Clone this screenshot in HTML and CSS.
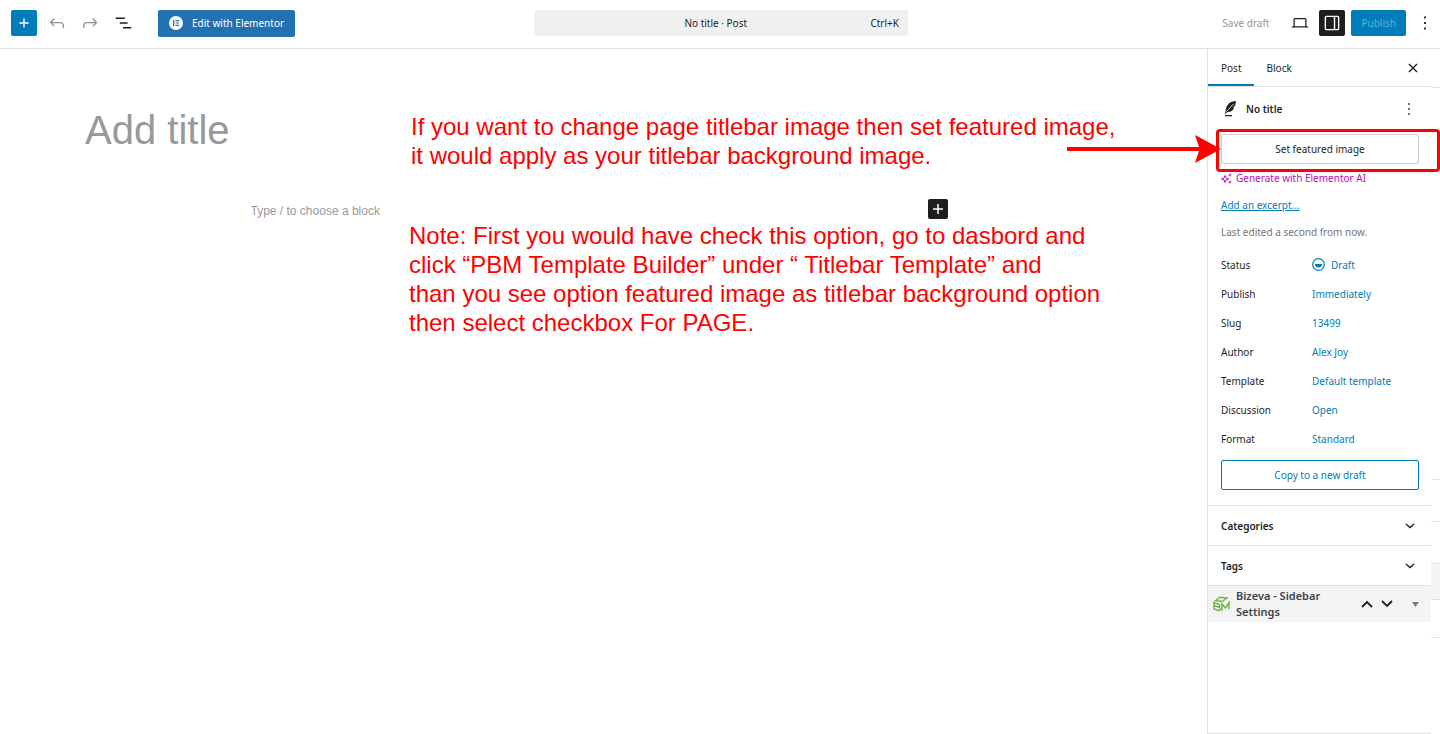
FILE: index.html
```html
<!DOCTYPE html>
<html lang="en">
<head>
    <meta charset="utf-8">
    <title>Add Post</title>
    <meta name="viewport" content="width=device-width, initial-scale=1">
    <link rel="stylesheet" href="styles.css">
</head>
<body>

    <header class="header">
        <div class="tools">
            <button class="iconBtn primary" aria-label="Block inserter">
                <svg width="22" height="22" viewBox="0 0 24 24"><path d="M12 7v10M7 12h10" stroke="currentColor" stroke-width="1.500"/></svg>
            </button>
            <button class="iconBtn muted" aria-label="Undo">
                <svg width="22" height="22" viewBox="0 0 24 24"><path fill="currentColor" d="M18.3 11.7c-.6-.6-1.4-.9-2.3-.9H6.7l2.9-3.3-1.1-1-4.5 5L8.500 16l1-1-2.700-2.700H16c.5 0 .9.2 1.300.5 1 1 1 3.400 1 4.500v.3h1.500v-.2c0-1.500 0-4.300-1.500-5.700z"/></svg>
            </button>
            <button class="iconBtn muted" aria-label="Redo">
                <svg width="22" height="22" viewBox="0 0 24 24"><path fill="currentColor" d="M15.600 6.500l-1.100 1 2.900 3.300H8c-.9 0-1.700.3-2.300.9-1.400 1.500-1.400 4.200-1.400 5.600v.2h1.500v-.3c0-1.100 0-3.500 1-4.500.3-.3.7-.5 1.300-.5h9.200L14.500 15l1.100 1.100 4.500-4.600-4.500-5z"/></svg>
            </button>
            <button class="iconBtn" aria-label="Document overview">
                <svg width="22" height="22" viewBox="0 0 24 24"><path fill="currentColor" d="M4 6h10v1.600H4V6zm4.500 5.200h8.500v1.600H8.500v-1.600zM12 16.400h9V18h-9v-1.600z"/></svg>
            </button>
            <button class="elementorBtn">
                <svg width="14" height="14" viewBox="0 0 14 14"><circle cx="7" cy="7" r="7" fill="#fff"/><path fill="#2271b1" d="M4 4h1.300v6H4zM6.500 4H10v1.200H6.500zM6.500 6.400H10v1.200H6.500zM6.500 8.800H10V10H6.500z"/></svg>
                Edit with Elementor
            </button>
        </div>
        <button class="command">
            <span class="commandTitle">No title · Post</span>
            <span>Ctrl+K</span>
        </button>
        <div class="settings">
            <button class="saveDraft" disabled>Save draft</button>
            <button class="iconBtn" aria-label="View">
                <svg width="20" height="20" viewBox="0 0 24 24"><path fill="currentColor" d="M20.500 16h-.7V8c0-1.100-.9-2-2-2H6.200c-1.100 0-2 .9-2 2v8h-.7c-.8 0-1.500.7-1.500 1.500h20c0-.8-.7-1.500-1.500-1.500zM5.700 8c0-.3.200-.5.5-.5h11.600c.3 0 .5.2.5.5v8H5.700V8z"/></svg>
            </button>
            <button class="iconBtn dark" aria-label="Settings">
                <svg width="22" height="22" viewBox="0 0 24 24"><path fill="currentColor" fill-rule="evenodd" d="M18 4H6c-1.100 0-2 .9-2 2v12c0 1.100.9 2 2 2h12c1.100 0 2-.9 2-2V6c0-1.100-.9-2-2-2zm-4 14.500H6c-.3 0-.5-.2-.5-.5V6c0-.3.2-.5.5-.5h8v13zm4.500-.5c0 .3-.2.500-.5.500h-2.500v-13H18c.3 0 .5.2.5.5v12z"/></svg>
            </button>
            <button class="publishBtn">Publish</button>
            <button class="iconBtn" aria-label="Options">
                <svg width="22" height="22" viewBox="0 0 24 24"><path fill="currentColor" d="M11 5h2v2h-2zM11 11h2v2h-2zM11 17h2v2h-2z"/></svg>
            </button>
        </div>
    </header>

    <div class="workspace">
        <main class="editor">
            <input class="titleInput" type="text" placeholder="Add title" aria-label="Add title">
            <div class="block">
                <input class="blockInput" type="text" placeholder="Type / to choose a block" aria-label="Empty block">
                <button class="addBlock" aria-label="Add block">
                    <svg width="20" height="20" viewBox="0 0 20 20"><path d="M10 5v10M5 10h10" stroke="#fff" stroke-width="1.500"/></svg>
                </button>
            </div>
            <p class="note noteTop">
                If you want to change page titlebar image then set featured image,<br>
                it would apply as your titlebar background image.
            </p>
            <p class="note noteBottom">
                Note: First you would have check this option, go to dasbord and<br>
                click “PBM Template Builder” under “ Titlebar Template” and<br>
                than you see option featured image as titlebar background option<br>
                then select checkbox For PAGE.
            </p>
        </main>

        <aside class="sidebar">
            <div class="tabs">
                <button class="tab active">Post</button>
                <button class="tab">Block</button>
                <button class="smallBtn close" aria-label="Close settings">
                    <svg width="10" height="10" viewBox="0 0 10 10"><path d="M1 1l8 8M9 1l-8 8" stroke="currentColor" stroke-width="1.400"/></svg>
                </button>
            </div>

            <section class="summary">
                <div class="cardHead">
                    <svg width="20" height="20" viewBox="0 0 20 20"><path fill="#1e1e1e" d="M15 2C9 2 5 6 4.500 12.500L4 14.500h1.200l.8-1.500c4 .3 6.300-1.700 7.200-4.600l-1.700.2 2.200-1.400C15 5.300 14.400 3.500 15 2zM4 16h7v1.200H4z"/><path d="M5.500 12.500L12.500 5" stroke="#fff" stroke-width=".8"/></svg>
                    <h2 class="cardTitle">No title</h2>
                    <button class="smallBtn" aria-label="Actions">
                        <svg width="20" height="20" viewBox="0 0 24 24"><path fill="currentColor" d="M11 5h2v2h-2zM11 11h2v2h-2zM11 17h2v2h-2z"/></svg>
                    </button>
                </div>
                <div class="featured">
                    <button class="wideBtn">Set featured image</button>
                    <svg class="arrow" width="154" height="30" viewBox="0 0 154 30"><path fill="#f00" d="M0 13h132L128 1l26 14-26 14 4-12H0z"/></svg>
                    <div class="frame"></div>
                </div>
                <button class="aiLink">
                    <svg width="11" height="11" viewBox="0 0 11 11"><path d="M4 2.500L5 5l2.500 1L5 7 4 9.500 3 7 .5 6 3 5z" fill="none" stroke="currentColor"/><path fill="currentColor" d="M9 0l.6 1.400L11 2l-1.400.6L9 4l-.6-1.400L7 2l1.400-.6zM9 7l.6 1.400L11 9l-1.400.6L9 11l-.6-1.400L7 9l1.400-.6z"/></svg>
                    Generate with Elementor AI
                </button>
                <a class="excerpt" href="#">Add an excerpt...</a>
                <p class="edited">Last edited a second from now.</p>

                <div class="row">
                    <span>Status</span>
                    <button class="value">
                        <svg width="13" height="13" viewBox="0 0 13 13"><circle cx="6.500" cy="6.500" r="5.800" fill="none" stroke="currentColor" stroke-width="1.200"/><path fill="currentColor" d="M3 6h7a3.500 3.500 0 0 1-7 0z"/></svg>
                        Draft
                    </button>
                </div>
                <div class="row"><span>Publish</span><button class="value">Immediately</button></div>
                <div class="row"><span>Slug</span><button class="value">13499</button></div>
                <div class="row"><span>Author</span><button class="value">Alex Joy</button></div>
                <div class="row"><span>Template</span><button class="value">Default template</button></div>
                <div class="row"><span>Discussion</span><button class="value">Open</button></div>
                <div class="row"><span>Format</span><button class="value">Standard</button></div>

                <button class="wideBtn copyBtn">Copy to a new draft</button>
            </section>

            <button class="panel">
                Categories
                <svg width="10" height="6" viewBox="0 0 10 6"><path d="M1 1l4 3.500L9 1" fill="none" stroke="currentColor" stroke-width="1.400"/></svg>
            </button>
            <button class="panel">
                Tags
                <svg width="10" height="6" viewBox="0 0 10 6"><path d="M1 1l4 3.500L9 1" fill="none" stroke="currentColor" stroke-width="1.400"/></svg>
            </button>

            <div class="metabox">
                <svg width="17" height="16" viewBox="0 0 17 16" fill="none" stroke="#6cb33f" stroke-width="1.400"><path d="M2.500 4.500L7 1.200l7 .8-5 3.500zM1 6.500V13l5 1.700c2-.7 1.500-3-.5-3.700 2-.5 1.500-2.500-.5-3.200zM1 9.500l4.500 1.500M9 15V8l3.500 4L16 6.500V13"/></svg>
                <h2 class="metaTitle">Bizeva - Sidebar Settings</h2>
                <button class="smallBtn" aria-label="Move up">
                    <svg width="12" height="8" viewBox="0 0 12 8"><path d="M1 7l5-5 5 5" fill="none" stroke="currentColor" stroke-width="1.800"/></svg>
                </button>
                <button class="smallBtn" aria-label="Move down">
                    <svg width="12" height="8" viewBox="0 0 12 8"><path d="M1 1l5 5 5-5" fill="none" stroke="currentColor" stroke-width="1.800"/></svg>
                </button>
                <button class="smallBtn toggle" aria-label="Toggle panel">
                    <svg width="7" height="5" viewBox="0 0 7 5"><path fill="#787c82" d="M0 0h7L3.500 5z"/></svg>
                </button>
            </div>
        </aside>

        <!-- edge of the column behind the sidebar -->
        <div class="edge">
            <div class="edgeTabs"></div>
            <div class="edgeSummary"></div>
            <div class="edgePanel"></div>
            <div class="edgePanel"></div>
            <div class="edgeMeta"></div>
            <div class="edgeLast"></div>
        </div>
    </div>

</body>
</html>
```

FILE: styles.css
```css
* {
    box-sizing: border-box;
}

body {
    min-height: 100vh;
    margin: 0;
    display: flex;
    flex-direction: column;
    background: #fff;
    color: #1e1e1e;
    font-family: "Noto Sans", sans-serif;
    font-size: 10px;
    line-height: 16px;
}

button {
    display: flex;
    align-items: center;
    margin: 0;
    padding: 0;
    border: 0;
    background: none;
    color: inherit;
    font: inherit;
    white-space: nowrap;
    cursor: pointer;
}

h2,
p {
    margin: 0;
}

svg {
    flex: none;
}

/* header */

.header {
    display: grid;
    grid-template-columns: 1fr 374px 1fr;
    align-items: center;
    height: 49px;
    padding: 0 0 2px 2px;
    border-bottom: 1px solid #e0e0e0;
}

.tools,
.settings {
    display: flex;
    align-items: center;
    gap: 7px;
}

.tools {
    padding-left: 9px;
}

.settings {
    justify-content: flex-end;
    gap: 6px;
    padding-right: 2px;
}

.iconBtn {
    justify-content: center;
    width: 26px;
    height: 26px;
    border-radius: 2px;
}

.primary {
    background: #007cba;
    color: #fff;
}

.muted {
    color: #949494;
}

.dark {
    background: #1e1e1e;
    color: #fff;
}

.elementorBtn {
    gap: 9px;
    height: 27px;
    margin-left: 15px;
    padding: 0 11px;
    border-radius: 2px;
    background: #2271b1;
    color: #fff;
}

.command {
    height: 26px;
    padding: 0 9px 0 27px;
    border-radius: 4px;
    background: #f0f0f0;
}

.commandTitle {
    flex: 1;
}

.saveDraft {
    margin-right: 12px;
    color: #949494;
}

.publishBtn {
    height: 26px;
    padding: 0 10px;
    border-radius: 2px;
    background: #007cba;
    color: #66b0d6;
}

/* editor */

.workspace {
    flex: 1;
    display: flex;
}

.editor {
    position: relative;
    flex: 1;
    min-width: 0;
    padding: 57px 94px 0 85px;
    font-family: Arial, "Liberation Sans", sans-serif;
}

.titleInput,
.blockInput {
    width: 100%;
    padding: 0;
    border: 0;
    outline: 0;
    background: none;
    color: #1e1e1e;
    font-family: inherit;
}

.titleInput {
    height: 48px;
    font-size: 40px;
}

.blockInput {
    padding-top: 3px;
    font-size: 12px;
}

.titleInput::placeholder,
.blockInput::placeholder {
    color: #999;
    opacity: 1;
}

.block {
    display: flex;
    align-items: center;
    max-width: 697px;
    margin: 45px auto 0;
}

.addBlock {
    flex: none;
    border-radius: 2px;
    background: #1e1e1e;
}

.note {
    position: absolute;
    color: #f00;
    font-size: 24px;
    line-height: 29px;
    white-space: nowrap;
}

.noteTop {
    top: 63px;
    left: 411px;
}

.noteBottom {
    top: 172px;
    left: 409px;
}

/* sidebar */

.sidebar {
    width: 224px;
    border-left: 1px solid #e0e0e0;
    border-bottom: 1px solid #e0e0e0;
}

.tabs {
    display: flex;
    height: 38px;
    padding-right: 12px;
    border-bottom: 1px solid #e0e0e0;
}

.tab {
    padding: 2px 12px 0 13px;
    border-bottom: 2px solid transparent;
}

.active {
    border-bottom-color: #007cba;
}

.smallBtn {
    justify-content: center;
    width: 20px;
}

.close {
    width: 12px;
    margin-left: auto;
}

.summary {
    padding: 12px 12px 15px 13px;
}

.cardHead {
    display: flex;
    align-items: center;
    gap: 5px;
    height: 20px;
    margin-bottom: 15px;
}

.cardTitle {
    flex: 1;
    font-size: 10px;
    font-weight: 600;
}

.featured {
    position: relative;
}

.wideBtn {
    justify-content: center;
    width: 100%;
    height: 30px;
    border: 1px solid #ccc;
    border-radius: 2px;
}

.frame {
    position: absolute;
    top: -5px;
    right: -21px;
    bottom: -8px;
    left: -5px;
    border: 3px solid #f00;
    border-radius: 4px;
    pointer-events: none;
}

.arrow {
    position: absolute;
    top: 0;
    right: 100%;
    pointer-events: none;
}

.aiLink {
    gap: 4px;
    margin: 6px 0 11px;
    color: #c00bb8;
}

.excerpt {
    color: #007cba;
}

.edited {
    margin: 11px 0 10px;
    color: #757575;
}

.row {
    display: grid;
    grid-template-columns: 91px 1fr;
    align-items: center;
    height: 29px;
}

.value {
    gap: 6px;
    color: #007cba;
}

.copyBtn {
    margin-top: 7px;
    border-color: #007cba;
    color: #007cba;
}

.panel {
    justify-content: space-between;
    width: 100%;
    height: 40px;
    padding: 0 16px 0 13px;
    border-top: 1px solid #e0e0e0;
    font-weight: 600;
}

.metabox {
    display: flex;
    align-items: center;
    height: 37px;
    padding: 0 12px 0 5px;
    border-top: 1px solid #e0e0e0;
    background: #f4f4f4;
}

.metaTitle {
    flex: 1;
    padding-left: 6px;
    color: #3c434a;
    font-size: 11px;
    font-weight: 600;
}

.toggle {
    width: 8px;
    margin-left: 14px;
}

.edge {
    width: 9px;
}

.edgeTabs {
    height: 39px;
    border-bottom: 1px solid #e0e0e0;
}

.edgeSummary {
    height: 391px;
}

.edgePanel {
    height: 42px;
    border-top: 1px solid #e8e8e8;
}

.edgeMeta {
    height: 37px;
    border-top: 1px solid #e0e0e0;
    border-bottom: 1px solid #e0e0e0;
    background: #f4f4f4;
}

.edgeLast {
    height: 38px;
    border-bottom: 1px solid #e8e8e8;
}
```
